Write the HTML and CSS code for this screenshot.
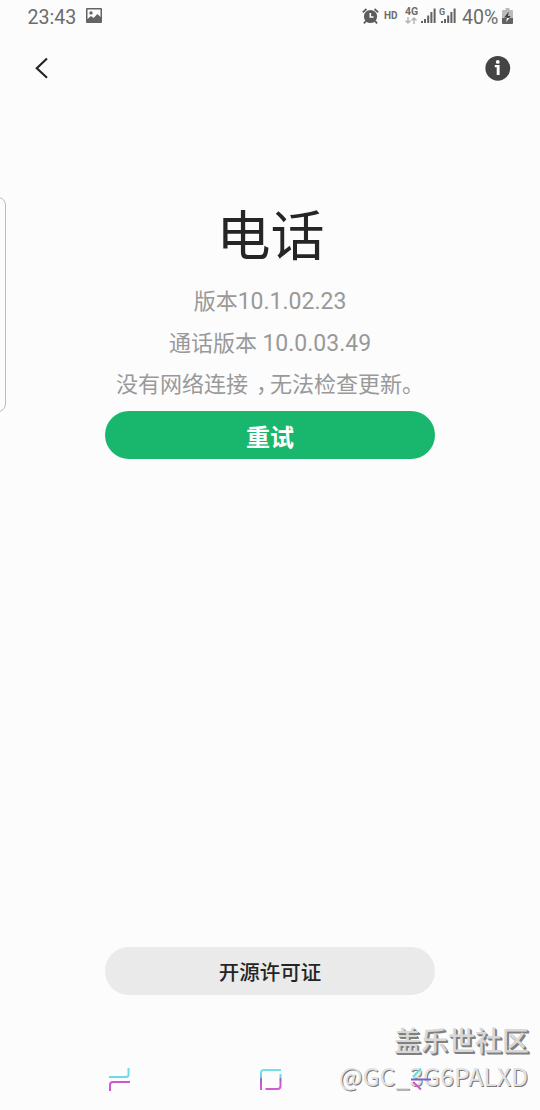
FILE: index.html
```html
<!DOCTYPE html>
<html lang="zh-CN">
<head>
<meta charset="utf-8">
<title>电话</title>
<link rel="stylesheet" href="styles.css">
</head>
<body>
<div class="screen">
  <div class="status">
    <span class="clock">23:43</span>
    <svg class="picture" width="16" height="15" viewBox="0 0 16 15"><path fill="#646464" fill-rule="evenodd" d="M1 0H15Q16 0 16 1V14Q16 15 15 15H1Q0 15 0 14V1Q0 0 1 0ZM1.5 1.5V11L5 8L7.5 10L11.5 6L14.500 9V1.500ZM5 3.200A1.700 1.700 0 1 1 5 6.600A1.700 1.700 0 0 1 5 3.200Z"/></svg>
    <div class="spacer"></div>
    <svg class="alarm" width="17" height="16" viewBox="0 0 17 16"><circle cx="8.500" cy="8.500" r="6.600" fill="#5c5c5c"/><path d="M8.300 5V9H11.500" fill="none" stroke="#fcfcfc" stroke-width="1.600"/><path d="M.8 4.300L4.400 1M16.200 4.300L12.600 1M4 12.700L2 15.500M13 12.700L15 15.500" fill="none" stroke="#5c5c5c" stroke-width="1.800"/></svg>
    <span class="hd">HD</span>
    <div class="network"><span>4G</span><svg width="12" height="7" viewBox="0 0 12 7"><path d="M3 0V6M.5 3.500L3 6L5.500 3.500M9 7V1M6.500 3.500L9 1L11.500 3.500" fill="none" stroke="#b4b4b4" stroke-width="1.400"/></svg></div>
    <svg class="bars" width="15" height="15" viewBox="0 0 15 15"><path d="M1 13V15M4 11V15M7.200 7.500V15M10.400 4V15M13.600 .5V15" fill="none" stroke="#626262" stroke-width="2"/></svg>
    <div class="second-sim"><span>G</span><svg width="15" height="15" viewBox="0 0 15 15"><path d="M1 13V15M4 11V15M7.200 7.500V15M10.400 4V15M13.600 .5V15" fill="none" stroke="#626262" stroke-width="2"/></svg></div>
    <span class="percent">40%</span>
    <svg class="battery" width="11" height="16" viewBox="0 0 11 16"><path d="M3.500 0H7.500V2H10Q11 2 11 3V10H0V3Q0 2 1 2H3.500Z" fill="#bababa"/><path d="M0 10H11V15Q11 16 10 16H1Q0 16 0 15Z" fill="#626262"/><path d="M6.800 3.500L2.200 9.500H5L4.600 10H7L8.800 8H6Z" fill="#444"/><path d="M5 10L4 14L7.500 10Z" fill="#fff"/></svg>
  </div>
  <header class="toolbar">
    <svg width="14" height="22" viewBox="0 0 14 22"><path d="M12 1.500L1.800 11.200L12 20.800" fill="none" stroke="#252525" stroke-width="2.200"/></svg>
    <svg width="26" height="26" viewBox="0 0 26 26"><circle cx="12.800" cy="13.300" r="12.400" fill="#444"/><circle cx="12.800" cy="6.900" r="1.900" fill="#fff"/><path d="M9.800 10H14.600V20H11.700V12.300H9.800Z" fill="#fff"/></svg>
  </header>
  <main class="content">
    <h1>电话</h1>
    <p>版本<span class="number">10.1.02.23</span></p>
    <p>通话版本 <span class="number">10.0.03.49</span></p>
    <p>没有网络连接<span class="comma">，</span>无法检查更新。</p>
    <button class="button retry">重试</button>
    <button class="button license">开源许可证</button>
  </main>
  <nav class="navigation">
    <svg width="24" height="26" viewBox="0 0 24 26" fill="none" stroke-width="2"><path d="M1 10H18Q20.500 10 20.500 7.500V1" stroke="#72d8e5"/><path d="M22 15H5Q2 15 2 18V24" stroke="#cc59cf"/></svg>
    <svg width="24" height="26" viewBox="0 0 24 26" fill="none" stroke-width="2"><defs><linearGradient id="duo" gradientUnits="userSpaceOnUse" x1="0" y1="2" x2="0" y2="23"><stop offset="0" stop-color="#72e3e7"/><stop offset=".38" stop-color="#72d2e0"/><stop offset=".5" stop-color="#9064bd"/><stop offset=".65" stop-color="#cc59cf"/><stop offset="1" stop-color="#d45bd6"/></linearGradient></defs><path d="M2 23V6Q2 3 5 3H22M21.500 7V19Q21.500 22 18.500 22H6.500" stroke="url(#duo)"/></svg>
    <svg width="24" height="26" viewBox="0 0 24 26" fill="none" stroke-width="2"><path d="M12 1.500L4 10" stroke="#65dce0"/><path d="M2 12.500H22" stroke="#7a63c5"/><path d="M4 15L12 22.500" stroke="#cc59cf"/></svg>
  </nav>
  <div class="edge-handle"></div>
  <div class="watermark"><div class="community">盖乐世社区</div><div class="user">@GC_3G6PALXD</div></div>
</div>
</body>
</html>
```
FILE: styles.css
```css
* { box-sizing: border-box; }
body { margin: 0; background: #fcfcfc; font-family: Roboto, "Noto Sans CJK SC", sans-serif; }
.screen { position: relative; width: 540px; height: 1110px; overflow: hidden; display: flex; flex-direction: column; background: #fcfcfc; }
svg { display: block; flex: none; }
.status { display: flex; height: 34px; padding: 0 27px; align-items: flex-start; color: #6c6c6c; }
.clock, .percent { font-size: 19.6px; line-height: 35px; }
.clock { width: 59px; padding-left: .5px; }
.picture { margin-top: 8px; }
.spacer { flex: 1; }
.alarm { margin-top: 8px; }
.hd { width: 21px; margin-left: 5px; font-size: 10px; font-weight: 700; line-height: 32px; }
.network { width: 14px; padding-top: 7px; font-size: 10.5px; font-weight: 700; line-height: 10px; }
.bars { margin: 8px 0 0 2px; }
.second-sim { display: flex; width: 18px; margin-left: 3px; padding-top: 8px; font-size: 9px; font-weight: 700; line-height: 8px; }
.second-sim span { width: 2px; }
.percent { width: 40px; margin-left: 5px; }
.battery { margin-top: 8px; }
.toolbar { display: flex; height: 68px; padding: 0 29px 0 35px; align-items: center; justify-content: space-between; }
.content { display: flex; flex: 1; flex-direction: column; align-items: center; padding: 96px 0 72px; }
h1 { margin: 0 0 3px; padding-left: 1px; color: #252525; font-size: 54px; line-height: 80px; font-weight: 400; }
p { margin: 0; color: #999; font-size: 22px; line-height: 41.5px; height: 41.5px; white-space: nowrap; }
.number { font-size: 23px; }
.comma { padding: 0 3px 0 8px; font-feature-settings: "halt"; }
.button { width: 330px; height: 48px; padding: 0; border: 0; border-radius: 24px; font-family: inherit; }
.retry { margin-top: 5.5px; background: #19b76e; color: #fff; font-size: 24px; font-weight: 700; }
.license { margin-top: auto; background: #eaeaea; color: #252525; font-size: 20.5px; font-weight: 500; }
.navigation { position: relative; z-index: 1; display: flex; height: 43px; padding: 0 107px 0 108px; align-items: flex-start; justify-content: space-between; }
.edge-handle { position: absolute; left: -12px; top: 197px; width: 18px; height: 215px; border: 1px solid #bbb; border-radius: 8px; }
.watermark { position: absolute; right: 11px; top: 1023px; color: #d8d8d8; text-align: right; white-space: nowrap; text-shadow: 1px 1px 0 #808080, 2px 2px 0 #808080; }
.community { font-size: 27px; line-height: 38px; font-weight: 500; }
.user { padding-right: 1px; color: #e2e2e2; font-family: "Noto Sans CJK SC", sans-serif; font-size: 24.8px; line-height: 28px; text-shadow: 1px 1px 0 #777; }
```
